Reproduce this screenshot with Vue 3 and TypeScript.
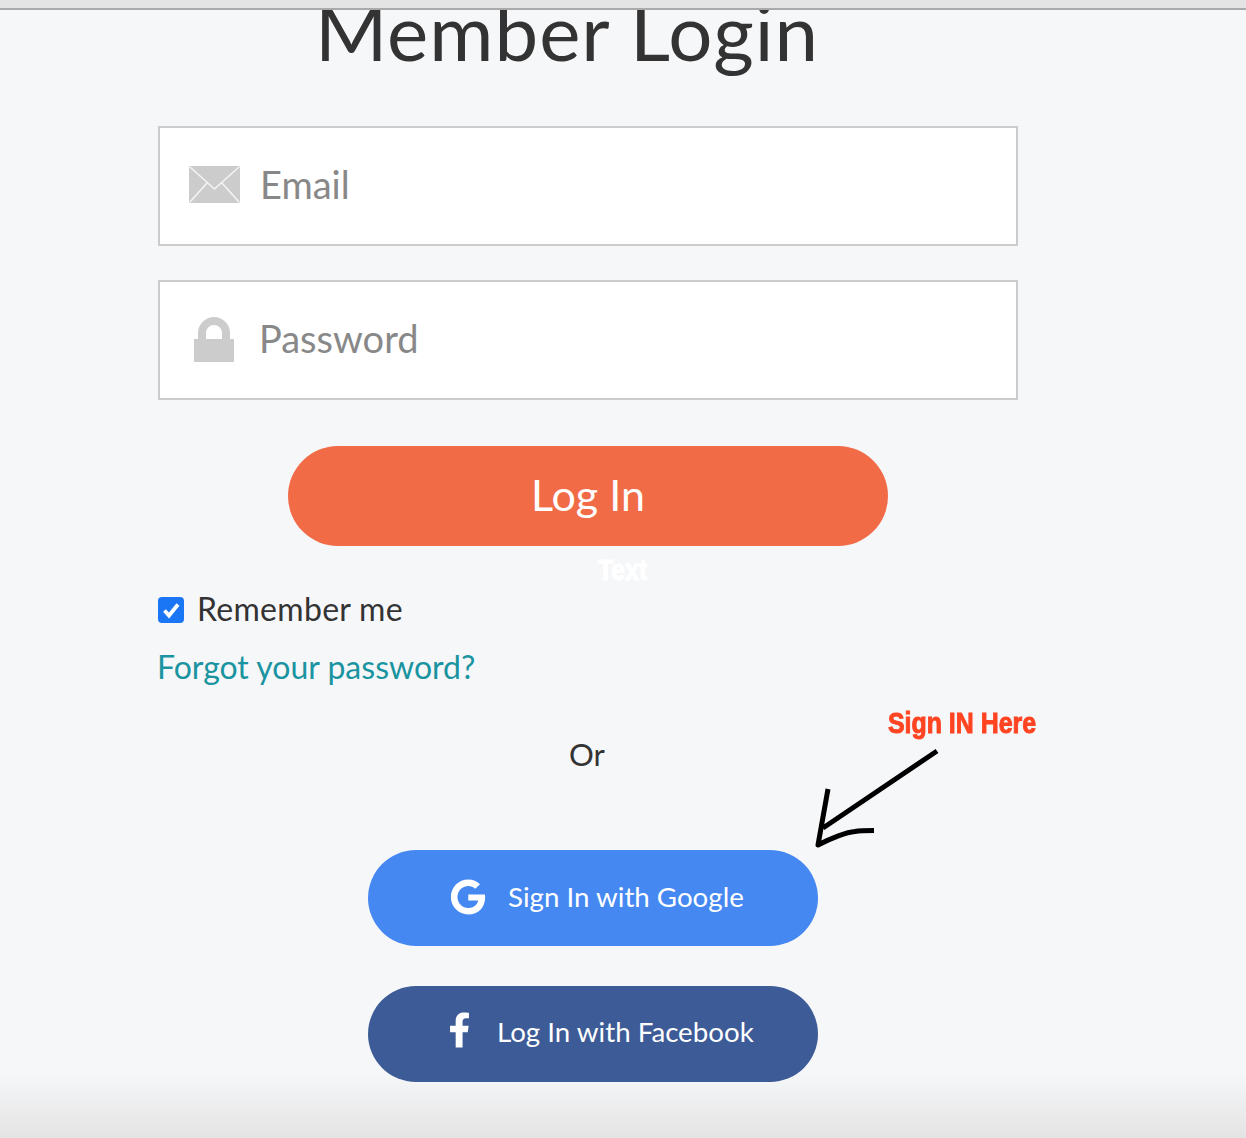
<script setup lang="ts">
const remember = true
</script>

<template>
  <div class="page">
    <div class="topbar"></div>
    <main class="panel">
      <div class="title-clip"><h1 class="title">Member Login</h1></div>
      <form class="form" @submit.prevent>
        <label class="field">
          <svg class="icon mail" viewBox="0 0 51 37" aria-hidden="true">
            <rect x="0" y="0" width="51" height="37" rx="1.5" fill="#cccccc" />
            <path d="M1 1 25.5 23 50 1M1 36 18 17M50 36 33 17" fill="none" stroke="#f4f4f4" stroke-width="1.6" />
          </svg>
          <input class="input" type="email" placeholder="Email" />
        </label>
        <label class="field">
          <svg class="icon lock" viewBox="0 0 40 46" aria-hidden="true">
            <path d="M0 23h40v23H0z" fill="#cccccc" />
            <path d="M8 24V17a12 12 0 0 1 24 0v7" fill="none" stroke="#cccccc" stroke-width="8" />
          </svg>
          <input class="input" type="password" placeholder="Password" />
        </label>
        <button class="login" type="submit">Log In</button>
        <label class="remember">
          <span class="check">
            <svg viewBox="0 0 26 26" aria-hidden="true">
              <path d="M6.500 13.500 11 18.500 20 7.500" fill="none" stroke="#fff" stroke-width="3.800" />
            </svg>
          </span>
          <span class="remember-label">Remember me</span>
        </label>
        <a class="forgot" href="#">Forgot your password?</a>
        <p class="or">Or</p>
        <button class="social google" type="button">
          <svg class="g" viewBox="0 0 488 512" aria-hidden="true">
            <path fill="#fff" d="M488 261.8C488 403.3 391.1 504 248 504 110.8 504 0 393.2 0 256S110.8 8 248 8c66.8 0 123 24.5 166.3 64.9l-67.5 64.9C258.5 52.6 94.3 116.6 94.3 256c0 86.5 69.1 156.6 153.7 156.6 98.2 0 135-70.4 140.8-106.9H248v-85.3h236.1c2.3 12.7 3.9 24.9 3.9 41.4z" />
          </svg>
          <span>Sign In with Google</span>
        </button>
        <button class="social facebook" type="button">
          <svg class="f" viewBox="22 0 276 512" aria-hidden="true">
            <path fill="#fff" d="M279.14 288l14.22-92.66h-88.91v-60.13c0-25.35 12.42-50.06 52.24-50.06h40.42V6.26S260.43 0 225.36 0c-73.22 0-121.08 44.38-121.08 124.72v70.62H22.89V288h81.39v224h100.17V288z" />
          </svg>
          <span>Log In with Facebook</span>
        </button>
      </form>
    </main>

    <span class="note note-text">Text</span>
    <span class="note note-sign">Sign IN Here</span>
    <svg class="arrow" viewBox="0 0 130 105" aria-hidden="true">
      <path d="M122 6 8 83M13 44 3 100C16 93 32 87 40 86.500 45 85.500 52 85.500 59 85.500" fill="none" stroke="#000" stroke-width="5" stroke-linejoin="round" />
    </svg>
  </div>
</template>

<style>
html, body { margin: 0; }
</style>

<style scoped>
.page {
  position: relative;
  height: 1138px;
  overflow: hidden;
  background: linear-gradient(to bottom, #f6f7f9 0, #f6f7f9 1072px, #e4e4e4 1138px);
  font-family: Lato, "Noto Sans", sans-serif;
  color: #333;
}
.topbar {
  height: 8px;
  background: #e4e4e4;
  border-bottom: 2px solid #aaa;
}
.panel {
  width: 860px;
  margin-left: 158px;
}
.title-clip {
  height: 116px;
  overflow: hidden;
}
.title {
  margin: -19px 0 0;
  padding-right: 42px;
  text-align: center;
  font-size: 78px;
  letter-spacing: 1px;
  line-height: 80px;
  font-weight: 400;
  color: #333;
}
.form {
  display: flex;
  flex-direction: column;
}
.field {
  box-sizing: border-box;
  height: 120px;
  margin-bottom: 34px;
  display: flex;
  align-items: center;
  background: #fff;
  border: 2px solid #ccc;
  padding-left: 29px;
}
.icon { flex: none; filter: blur(0.5px); }
.mail { width: 51px; height: 37px; margin: 0 20px 3px 0; }
.lock { width: 40px; height: 46px; margin: 0 25px 2px 5px; }
.input {
  flex: 1;
  min-width: 0;
  border: 0;
  outline: 0;
  padding: 0 0 4px;
  background: transparent;
  font: 400 38px/44px Lato, "Noto Sans", sans-serif;
  color: #888;
}
.input::placeholder { color: #888; opacity: 1; }
.login {
  align-self: center;
  width: 600px;
  height: 100px;
  margin-top: 12px;
  padding: 0 0 2px;
  border: 0;
  border-radius: 50px;
  background: #f26b47;
  color: #fff;
  font: 400 43px/46px Lato, "Noto Sans", sans-serif;
}
.remember {
  display: flex;
  align-items: center;
  gap: 13px;
  height: 28px;
  margin-top: 50px;
  font-size: 32px;
  letter-spacing: 0.3px;
  line-height: 36px;
  color: #333;
}
.remember-label { padding-bottom: 2px; }
.check {
  width: 26px;
  height: 26px;
  border-radius: 4px;
  background: #1a76f5;
  display: block;
}
.check svg { display: block; width: 26px; height: 26px; }
.forgot {
  margin: 25px 0 0 -1px;
  font-size: 32px;
  line-height: 36px;
  color: #1a94a0;
  text-decoration: none;
}
.or {
  margin: 51px 0 0;
  padding-right: 2px;
  text-align: center;
  font-size: 31px;
  line-height: 36px;
  color: #333;
}
.social {
  align-self: flex-start;
  box-sizing: border-box;
  width: 450px;
  height: 96px;
  margin-left: 210px;
  border: 0;
  border-radius: 48px;
  display: flex;
  align-items: center;
  padding: 0 0 2px 82px;
  color: #fff;
  font: 400 27.7px/32px Lato, "Noto Sans", sans-serif;
}
.social svg { flex: none; }
.google { background: #4688f1; margin-top: 78px; }
.facebook { background: #3d5b96; margin-top: 40px; padding-bottom: 4px; }
.g { width: 36px; height: 36px; margin: 0 22px 1px 0; }
.f { width: 19px; height: 36px; margin: 0 28px 4px 0; }
.note {
  position: absolute;
  font-family: "Liberation Sans", sans-serif;
  font-weight: 700;
  white-space: nowrap;
  transform-origin: left top;
  -webkit-text-stroke: 1px currentColor;
}
.note-text {
  left: 598px;
  top: 553px;
  font-size: 30px;
  line-height: 34px;
  color: #fff;
  transform: scaleX(0.83);
}
.note-sign {
  left: 888px;
  top: 706px;
  font-size: 30px;
  line-height: 34px;
  color: #ff4422;
  transform: scaleX(0.83);
}
.arrow {
  position: absolute;
  left: 815px;
  top: 745px;
  width: 130px;
  height: 105px;
}
</style>
